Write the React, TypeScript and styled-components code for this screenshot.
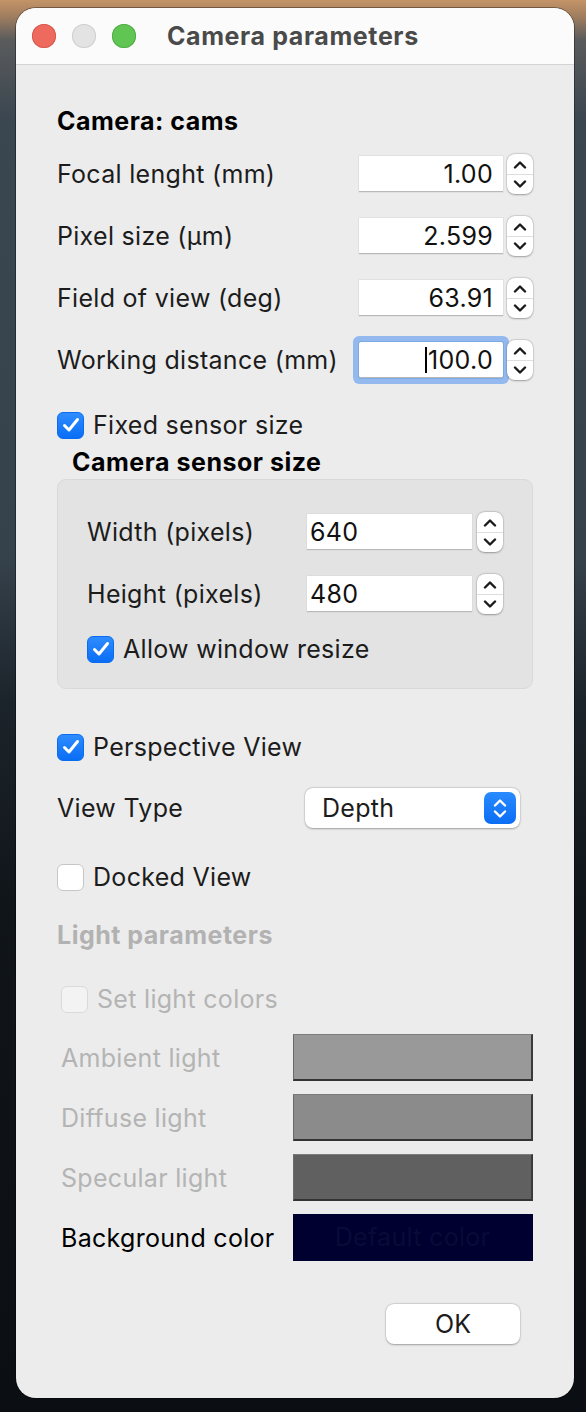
import styled, { createGlobalStyle } from "styled-components";

const GlobalStyle = createGlobalStyle`
  html, body {
    margin: 0;
    padding: 0;
  }
  body {
    width: 586px;
    height: 1412px;
    overflow: hidden;
    font-family: Inter, "Liberation Sans", sans-serif;
    background: linear-gradient(
      180deg,
      #c49468 0px,
      #a17e5f 16px,
      #5a5b5c 40px,
      #3a4650 120px,
      #35414b 560px,
      #1c242b 700px,
      #10151a 900px,
      #0b0f13 1412px
    );
  }
`;

const Window = styled.div`
  margin: 8px 0 0 16px;
  width: 558px;
  height: 1390px;
  border-radius: 20px;
  overflow: hidden;
  background: #ececec;
  display: flex;
  flex-direction: column;
  box-shadow: 0 0 0 1px rgba(0, 0, 0, 0.35);
`;

const TitleBar = styled.div`
  height: 56px;
  flex: none;
  background: #fbfbfb;
  border-bottom: 1px solid #d4d4d4;
  display: flex;
  align-items: center;
  padding-left: 16px;
`;

const Light = styled.span<{ $color: string; $edge: string }>`
  width: 24px;
  height: 24px;
  border-radius: 50%;
  background: ${(p) => p.$color};
  box-shadow: inset 0 0 0 1px ${(p) => p.$edge};
  margin-right: 16px;
`;

const Title = styled.div`
  margin-left: 15px;
  font-size: 25px;
  font-weight: 700;
  color: #4a4a4a;
  letter-spacing: 0.6px;
`;

const Body = styled.div`
  flex: 1;
  display: flex;
  flex-direction: column;
  padding: 1px 41px 0 41px;
`;

const Heading = styled.div<{ $mt: number; $indent?: number; $disabled?: boolean }>`
  margin-top: ${(p) => p.$mt}px;
  margin-left: ${(p) => p.$indent || 0}px;
  height: 30px;
  line-height: 30px;
  font-size: 25px;
  font-weight: 700;
  letter-spacing: 0.5px;
  color: ${(p) => (p.$disabled ? "#b2b2b2" : "#000")};
`;

const Row = styled.div<{ $mt: number }>`
  margin-top: ${(p) => p.$mt}px;
  height: 44px;
  display: flex;
  align-items: center;
  justify-content: space-between;
`;

const Label = styled.span<{ $disabled?: boolean; $dark?: boolean }>`
  font-size: 25px;
  letter-spacing: 0.3px;
  color: ${(p) => (p.$disabled ? "#b4b4b4" : p.$dark ? "#000" : "#1c1c1c")};
`;

const Field = styled.div<{ $gap: number }>`
  display: flex;
  align-items: center;
  gap: ${(p) => p.$gap}px;
`;

const NumberBox = styled.div<{ $width: number; $align: string; $focused?: boolean }>`
  width: ${(p) => p.$width}px;
  height: 36px;
  box-sizing: border-box;
  background: #fff;
  border-bottom: 1px solid #b9b9b9;
  box-shadow: 0 0 0 0.5px #d6d6d6;
  display: flex;
  align-items: center;
  justify-content: ${(p) => (p.$align === "right" ? "flex-end" : "flex-start")};
  padding: 0 10px 0 3px;
  font-size: 25px;
  letter-spacing: 0.3px;
  color: #111;
  ${(p) =>
    p.$focused &&
    `
    box-shadow: 0 0 0 1px #7da9e6, 0 0 0 6px #93b9ee;
    border-radius: 2px;
  `}
`;

const Caret = styled.span`
  width: 2px;
  height: 26px;
  background: #000;
  margin-right: 1px;
`;

const Stepper = styled.div<{ $width: number }>`
  width: ${(p) => p.$width}px;
  height: 40px;
  border-radius: 8px;
  background: #fff;
  box-shadow: 0 0.5px 2px rgba(0, 0, 0, 0.3), 0 0 0 0.5px rgba(0, 0, 0, 0.1);
  display: flex;
  flex-direction: column;
  align-items: center;
  justify-content: space-around;
  position: relative;
  &::after {
    content: "";
    position: absolute;
    left: 0;
    right: 0;
    top: 50%;
    height: 1px;
    background: #dedede;
  }
`;

const Chevron = ({ up, color = "#1a1a1a" }: { up?: boolean; color?: string }) => (
  <svg width="14" height="9" viewBox="0 0 14 9">
    <path
      d={up ? "M2 7.5 L7 2.5 L12 7.5" : "M2 1.5 L7 6.5 L12 1.5"}
      fill="none"
      stroke={color}
      strokeWidth="2.4"
      strokeLinecap="round"
      strokeLinejoin="round"
    />
  </svg>
);

const Spin = ({ width }: { width: number }) => (
  <Stepper $width={width}>
    <Chevron up />
    <Chevron />
  </Stepper>
);

const CheckRow = styled.label<{ $mt: number; $indent?: number }>`
  margin-top: ${(p) => p.$mt}px;
  margin-left: ${(p) => p.$indent || 0}px;
  height: 30px;
  display: flex;
  align-items: center;
  gap: 9px;
`;

const Box = styled.span<{ $state: "on" | "off" | "disabled" }>`
  width: 27px;
  height: 27px;
  box-sizing: border-box;
  border-radius: 6px;
  display: flex;
  align-items: center;
  justify-content: center;
  background: ${(p) =>
    p.$state === "on"
      ? "linear-gradient(180deg, #2e8cff, #0a6ef5)"
      : p.$state === "off"
      ? "#fff"
      : "#f3f3f3"};
  border: 1px solid
    ${(p) => (p.$state === "on" ? "#0a6cf0" : p.$state === "off" ? "#c6c6c6" : "#dadada")};
`;

const Check = ({ state }: { state: "on" | "off" | "disabled" }) => (
  <Box $state={state}>
    {state === "on" && (
      <svg width="18" height="16" viewBox="0 0 18 16">
        <path
          d="M2.5 8.5 L7 13 L15.5 2.5"
          fill="none"
          stroke="#fff"
          strokeWidth="3"
          strokeLinecap="round"
          strokeLinejoin="round"
        />
      </svg>
    )}
  </Box>
);

const Group = styled.div`
  margin-top: 2px;
  height: 210px;
  box-sizing: border-box;
  border: 1px solid #d9d9d9;
  border-radius: 9px;
  background: #e3e3e3;
  padding: 30px 29px 0 29px;
  display: flex;
  flex-direction: column;
`;

const Select = styled.div`
  width: 215px;
  height: 40px;
  box-sizing: border-box;
  margin-right: 13px;
  border-radius: 8px;
  background: #fff;
  box-shadow: 0 0.5px 2px rgba(0, 0, 0, 0.3), 0 0 0 0.5px rgba(0, 0, 0, 0.08);
  display: flex;
  align-items: center;
  justify-content: space-between;
  padding: 0 4px 0 17px;
  font-size: 25px;
  letter-spacing: 0.3px;
  color: #1c1c1c;
`;

const SelectButton = styled.span`
  width: 32px;
  height: 32px;
  border-radius: 7px;
  background: linear-gradient(180deg, #2a8bff, #0a6df5);
  display: flex;
  flex-direction: column;
  align-items: center;
  justify-content: center;
  gap: 3px;
`;

const Swatches = styled.div`
  margin-top: 20px;
  display: flex;
  flex-direction: column;
  gap: 13px;
  padding-left: 4px;
`;

const SwatchRow = styled.div`
  height: 47px;
  display: flex;
  align-items: center;
  justify-content: space-between;
`;

const Swatch = styled.div<{ $color: string; $flat?: boolean }>`
  width: 240px;
  height: 47px;
  box-sizing: border-box;
  background: ${(p) => p.$color};
  border-top: 1px solid ${(p) => (p.$flat ? p.$color : "#7c7c7c")};
  border-left: 1px solid ${(p) => (p.$flat ? p.$color : "#6a6a6a")};
  border-bottom: 2px solid ${(p) => (p.$flat ? p.$color : "#333")};
  border-right: 2px solid ${(p) => (p.$flat ? p.$color : "#3a3a3a")};
  display: flex;
  align-items: center;
  justify-content: center;
  font-size: 25px;
  letter-spacing: 0.3px;
  color: #0a0a36;
`;

const Footer = styled.div`
  margin-top: 43px;
  display: flex;
  justify-content: flex-end;
  padding-right: 13px;
`;

const OkButton = styled.button`
  width: 134px;
  height: 40px;
  border: none;
  border-radius: 8px;
  background: #fff;
  box-shadow: 0 0.5px 2px rgba(0, 0, 0, 0.3), 0 0 0 0.5px rgba(0, 0, 0, 0.08);
  font-family: inherit;
  font-size: 25px;
  color: #1c1c1c;
`;

const cameraRows = [
  { label: "Focal lenght (mm)", value: "1.00" },
  { label: "Pixel size (µm)", value: "2.599" },
  { label: "Field of view (deg)", value: "63.91" },
  { label: "Working distance (mm)", value: "100.0", focused: true },
];

const lights = [
  { label: "Ambient light", color: "#999999" },
  { label: "Diffuse light", color: "#8b8b8b" },
  { label: "Specular light", color: "#606060" },
];

export default function App() {
  return (
    <>
      <GlobalStyle />
      <Window>
        <TitleBar>
          <Light $color="#ee6a5f" $edge="#d85a50" />
          <Light $color="#e3e3e3" $edge="#cfcfcf" />
          <Light $color="#61c554" $edge="#52ad47" />
          <Title>Camera parameters</Title>
        </TitleBar>
        <Body>
          <Heading $mt={40}>Camera: cams</Heading>
          {cameraRows.map((r, i) => (
            <Row key={r.label} $mt={i === 0 ? 16 : 18}>
              <Label>{r.label}</Label>
              <Field $gap={4}>
                <NumberBox $width={144} $align="right" $focused={r.focused}>
                  {r.focused && <Caret />}
                  {r.value}
                </NumberBox>
                <Spin width={26} />
              </Field>
            </Row>
          ))}
          <CheckRow $mt={28}>
            <Check state="on" />
            <Label>Fixed sensor size</Label>
          </CheckRow>
          <Heading $mt={7} $indent={15}>
            Camera sensor size
          </Heading>
          <Group>
            <Row $mt={0}>
              <Label>Width (pixels)</Label>
              <Field $gap={5}>
                <NumberBox $width={165} $align="left">
                  640
                </NumberBox>
                <Spin width={26} />
              </Field>
            </Row>
            <Row $mt={18}>
              <Label>Height (pixels)</Label>
              <Field $gap={5}>
                <NumberBox $width={165} $align="left">
                  480
                </NumberBox>
                <Spin width={26} />
              </Field>
            </Row>
            <CheckRow $mt={18}>
              <Check state="on" />
              <Label>Allow window resize</Label>
            </CheckRow>
          </Group>
          <CheckRow $mt={43}>
            <Check state="on" />
            <Label>Perspective View</Label>
          </CheckRow>
          <Row $mt={24}>
            <Label>View Type</Label>
            <Select>
              Depth
              <SelectButton>
                <Chevron up color="#fff" />
                <Chevron color="#fff" />
              </SelectButton>
            </Select>
          </Row>
          <CheckRow $mt={32}>
            <Check state="off" />
            <Label>Docked View</Label>
          </CheckRow>
          <Heading $mt={28} $disabled>
            Light parameters
          </Heading>
          <CheckRow $mt={34} $indent={4}>
            <Check state="disabled" />
            <Label $disabled>Set light colors</Label>
          </CheckRow>
          <Swatches>
            {lights.map((l) => (
              <SwatchRow key={l.label}>
                <Label $disabled>{l.label}</Label>
                <Swatch $color={l.color} />
              </SwatchRow>
            ))}
            <SwatchRow>
              <Label $dark>Background color</Label>
              <Swatch $color="#000030" $flat>
                Default color
              </Swatch>
            </SwatchRow>
          </Swatches>
          <Footer>
            <OkButton>OK</OkButton>
          </Footer>
        </Body>
      </Window>
    </>
  );
}
